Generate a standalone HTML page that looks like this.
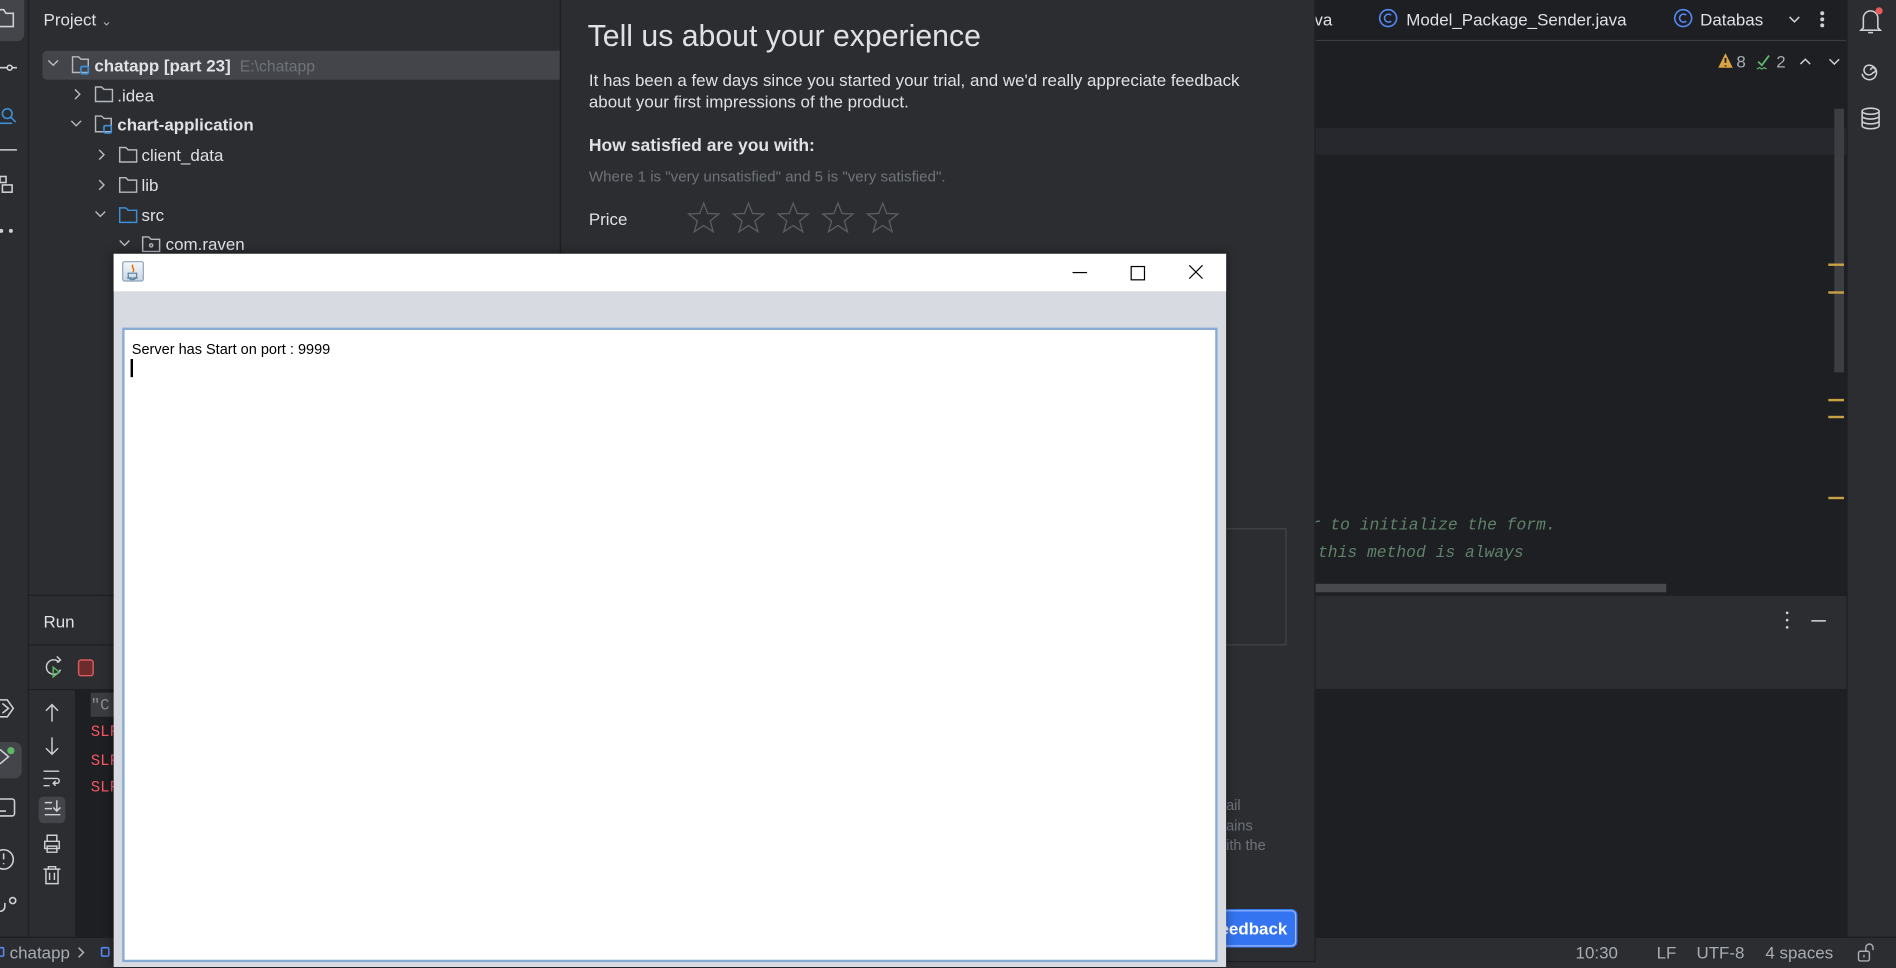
<!DOCTYPE html>
<html><head><meta charset="utf-8">
<style>
html,body{margin:0;padding:0;background:#1e1f22;overflow:hidden;width:1896px;height:967px}
#w{position:absolute;left:0;top:0;width:1568px;height:800px;transform:scale(1.20918,1.20875);transform-origin:0 0;background:#1e1f22;font-family:"Liberation Sans",sans-serif;color:#dfe1e5}
.a{position:absolute}
.t{position:absolute;white-space:nowrap;font-size:14px;line-height:16px}
.mono{font-family:"Liberation Mono","DejaVu Sans Mono",monospace}
svg{position:absolute;overflow:visible}
</style></head><body><div id="w">

<!-- left strip -->
<div class="a" style="left:0;top:0;width:23px;height:775px;background:#2b2d30;border-right:1px solid #1e1f22"></div>
<div class="a" style="left:0;top:0;width:20px;height:34px;background:#43454a;border-radius:0 0 6px 0"></div>
<svg style="left:0;top:0" width="23" height="775" fill="none" stroke="#ced0d6" stroke-width="1.3">
<path d="M-3 8h6l2 3h6v11h-14z"/>
<path d="M0 56h6M10 56h4"/><circle cx="8" cy="56" r="2"/>
<circle cx="6" cy="94" r="4" stroke="#3d8fd8"/><path d="M9 97l4 4" stroke="#3d8fd8"/><path d="M0 102h10" stroke="#3d8fd8"/>
<path d="M0 124h14"/>
<rect x="0" y="146" width="5" height="5"/><rect x="2" y="153" width="8" height="6"/>
<circle cx="1" cy="191" r="1" fill="#ced0d6"/><circle cx="9" cy="191" r="1" fill="#ced0d6"/>
<path d="M-2 579h8l5 7-5 7h-8M2 582l5 4-5 4"/>
<path d="M0 620l8 6-8 6"/>
<rect x="-6" y="661" width="18" height="14" rx="2"/><path d="M0 671h5"/>
<circle cx="3" cy="711" r="8"/><path d="M3 706v5M3 714v1"/>
<path d="M0 754a4 4 0 0 0 4-4v-3M8 745a2.5 2.5 0 1 1 0 .1"/>
</svg>
<div class="a" style="left:0;top:614px;width:18px;height:30px;background:#43454a;border-radius:0 6px 6px 0"></div>
<svg style="left:0;top:614px" width="20" height="30" fill="none" stroke="#ced0d6" stroke-width="1.3"><path d="M0 6l7 6-7 6"/><circle cx="9" cy="7" r="3" fill="#5fb865" stroke="none"/></svg>

<!-- project panel -->
<div class="a" style="left:24px;top:0;width:439px;height:492px;background:#2b2d30"></div>
<div class="t" style="left:36px;top:8px;font-size:14px;color:#dfe1e5">Project <span style="font-size:11px;color:#aaa">⌄</span></div>
<div class="a" style="left:35px;top:42px;width:428px;height:24px;background:#43454a;border-radius:4px 0 0 4px"></div>
<svg style="left:0;top:0" width="463" height="215" fill="none" stroke="#b4b8bf" stroke-width="1.2">
<path d="M40 50l4 4 4-4"/>
<path d="M60 47h5l2 2h6v11h-13z"/><rect x="67" y="55" width="6" height="6" rx="1" stroke="#3d8fd8" stroke-width="1.4"/>
<path d="M62 74l4 4-4 4"/><path d="M79 72h5l2 2h7v10h-14z"/>
<path d="M59 100l4 4 4-4"/><path d="M79 96h5l2 2h6v11h-13z"/><rect x="86" y="104" width="6" height="6" rx="1" stroke="#3d8fd8" stroke-width="1.4"/>
<path d="M82 124l4 4-4 4"/><path d="M99 122h5l2 2h7v10h-14z"/>
<path d="M82 149l4 4-4 4"/><path d="M99 147h5l2 2h7v10h-14z"/>
<path d="M79 175l4 4 4-4"/><path d="M99 172h5l2 2h7v10h-14z" stroke="#3d8fd8"/>
<path d="M99 199l4 4 4-4"/><path d="M118 196h5l2 2h7v10h-14z"/><circle cx="125" cy="203" r="1.3"/>
</svg>
<div class="t" style="left:78px;top:46px;font-weight:bold;color:#dfe1e5">chatapp [part 23] <span style="font-weight:normal;color:#6f737a;font-size:13px">&nbsp;E:\chatapp</span></div>
<div class="t" style="left:97px;top:71px">.idea</div>
<div class="t" style="left:97px;top:95px;font-weight:bold">chart-application</div>
<div class="t" style="left:117px;top:120px">client_data</div>
<div class="t" style="left:117px;top:145px">lib</div>
<div class="t" style="left:117px;top:170px">src</div>
<div class="t" style="left:137px;top:194px">com.raven</div>

<!-- run panel -->
<div class="a" style="left:24px;top:492px;width:439px;height:283px;background:#2b2d30;border-top:1px solid #1e1f22"></div>
<div class="t" style="left:36px;top:506px;color:#dfe1e5">Run</div>
<div class="a" style="left:24px;top:533px;width:439px;height:1px;background:#1e1f22"></div>
<div class="a" style="left:24px;top:570px;width:439px;height:1px;background:#1e1f22"></div>
<div class="a" style="left:62px;top:571px;width:401px;height:204px;background:#1e1f22"></div>
<div class="a" style="left:75px;top:573px;width:20px;height:20px;background:#3a3c40"></div>
<div class="t mono" style="left:75px;top:576px;font-size:13px;color:#8c8f94">"C</div>
<div class="t mono" style="left:75px;top:598px;font-size:13px;color:#f75464">SLF</div>
<div class="t mono" style="left:75px;top:622px;font-size:13px;color:#f75464">SLF</div>
<div class="t mono" style="left:75px;top:644px;font-size:13px;color:#f75464">SLF</div>
<div class="a" style="left:32px;top:659px;width:22px;height:22px;background:#43454a;border-radius:4px"></div>
<svg style="left:0;top:0" width="100" height="800" fill="none" stroke="#ced0d6" stroke-width="1.2">
<path d="M49 548a6 6 0 1 0 1 6M47 543l3 3-3 2"/><path d="M44 552v8l5-4z" stroke="#5fb865"/>
<rect x="65" y="546" width="12" height="13" rx="2" fill="#6e2b2b" stroke="#db5c5c"/>
<path d="M43 583v14M38 588l5-5 5 5"/>
<path d="M43 610v14M38 619l5 5 5-5"/>
<path d="M36 638h13M36 644h11a2 2 0 0 1 0 4h-3M46 646l-2 2 2 2M36 650h5"/>
<path d="M37 664h6M37 669h6M37 674h13M47 662v9M44 668l3 3 3-3"/>
<path d="M37 696h12v6h-12zM39 696v-5h8v5M39 700h8v5h-8z"/>
<path d="M36 719h14M40 719v-2h6v2M38 719v12h10v-12M41 722v6M45 722v6"/>
</svg>

<!-- editor area -->
<div class="a" style="left:1087px;top:0;width:440px;height:33px;background:#1e1f22;border-bottom:1px solid #393b40"></div>
<div class="t" style="left:1087px;top:8px">va</div>
<svg style="left:1140px;top:7px" width="16" height="16" fill="none" stroke="#548af7" stroke-width="1.3"><circle cx="8" cy="8" r="7"/><path d="M10.5 5.5a3.3 3.3 0 1 0 0 5"/></svg>
<div class="t" style="left:1163px;top:8px">Model_Package_Sender.java</div>
<svg style="left:1384px;top:7px" width="16" height="16" fill="none" stroke="#548af7" stroke-width="1.3"><circle cx="8" cy="8" r="7"/><path d="M10.5 5.5a3.3 3.3 0 1 0 0 5"/></svg>
<div class="t" style="left:1406px;top:8px;color:#dfe1e5">Databas</div>
<svg style="left:1480px;top:10px" width="40" height="14" fill="none" stroke="#ced0d6" stroke-width="1.3"><path d="M0 4l4 4 4-4"/><circle cx="27" cy="1" r="1" fill="#ced0d6"/><circle cx="27" cy="6" r="1" fill="#ced0d6"/><circle cx="27" cy="11" r="1" fill="#ced0d6"/></svg>
<svg style="left:1421px;top:43px" width="100" height="16"><path d="M6 1l6 12h-12z" fill="#d9a343"/><path d="M6 5v4M6 11v1" stroke="#1e1f22" stroke-width="1.5"/><path d="M33 8l3 3 6-8" stroke="#5fb865" stroke-width="1.5" fill="none"/><path d="M32 14l2-1 2 1 2-1 2 1" stroke="#5fb865" fill="none"/><path d="M68 10l4-4 4 4M92 6l4 4 4-4" stroke="#ced0d6" stroke-width="1.2" fill="none"/></svg>
<div class="t" style="left:1436px;top:43px;color:#a8adb5">8</div>
<div class="t" style="left:1469px;top:43px;color:#a8adb5">2</div>
<div class="a" style="left:1087px;top:106px;width:440px;height:22px;background:#26282e"></div>
<div class="a" style="left:1517px;top:90px;width:8px;height:218px;background:#3c3e42"></div>
<div class="a" style="left:1512px;top:218px;width:13px;height:2px;background:#c9a046"></div>
<div class="a" style="left:1512px;top:241px;width:13px;height:2px;background:#c9a046"></div>
<div class="a" style="left:1512px;top:330px;width:13px;height:2px;background:#c9a046"></div>
<div class="a" style="left:1512px;top:344px;width:13px;height:2px;background:#c9a046"></div>
<div class="a" style="left:1512px;top:411px;width:13px;height:2px;background:#c9a046"></div>
<div class="t mono" style="left:1084px;top:428px;font-style:italic;color:#5f826b;font-size:13.5px">r to initialize the form.</div>
<div class="t mono" style="left:1090px;top:451px;font-style:italic;color:#5f826b;font-size:13.5px">this method is always</div>
<div class="a" style="left:1087px;top:483px;width:291px;height:7px;background:#48494d"></div>
<div class="a" style="left:1087px;top:492px;width:440px;height:41px;background:#2b2d30;border-top:1px solid #1e1f22"></div>
<div class="a" style="left:1087px;top:534px;width:440px;height:36px;background:#2b2d30"></div>
<svg style="left:1470px;top:505px" width="44" height="18" fill="#ced0d6"><circle cx="8" cy="2" r="1.1"/><circle cx="8" cy="8" r="1.1"/><circle cx="8" cy="14" r="1.1"/><rect x="28" y="8" width="12" height="1.3"/></svg>

<!-- right strip -->
<div class="a" style="left:1527px;top:0;width:41px;height:775px;background:#2b2d30;border-left:1px solid #1e1f22"></div>
<svg style="left:1527px;top:0" width="41" height="120" fill="none" stroke="#ced0d6" stroke-width="1.3">
<path d="M14 23v-8a6 6 0 0 1 12 0v8l2 2h-16z M18 27h4"/><circle cx="27" cy="9" r="3" fill="#e55b5b" stroke="none"/>
<path d="M20 58a2 2 0 1 1 2 2a4 4 0 1 1 -4-6a6 6 0 1 1 -5 7"/>
<ellipse cx="20" cy="92" rx="7" ry="2.5"/><path d="M13 92v12a7 2.5 0 0 0 14 0v-12M13 96a7 2.5 0 0 0 14 0M13 100a7 2.5 0 0 0 14 0"/>
</svg>

<!-- status bar -->
<div class="a" style="left:0;top:775px;width:1568px;height:25px;background:#2b2d30;border-top:1px solid #1e1f22"></div>
<svg style="left:0;top:780px" width="100" height="16" fill="none" stroke="#548af7" stroke-width="1.3"><rect x="-3" y="4" width="6" height="7" rx="1"/><path d="M65 4l4 4-4 4" stroke="#a8adb5"/><rect x="84" y="4" width="6" height="7" rx="1"/></svg>
<div class="t" style="left:8px;top:780px;color:#a8adb5;font-size:14px">chatapp</div>
<div class="t" style="left:1303px;top:780px;color:#a8adb5">10:30</div>
<div class="t" style="left:1370px;top:780px;color:#a8adb5">LF</div>
<div class="t" style="left:1403px;top:780px;color:#a8adb5">UTF-8</div>
<div class="t" style="left:1460px;top:780px;color:#a8adb5">4 spaces</div>
<svg style="left:1535px;top:779px" width="20" height="18" fill="none" stroke="#a8adb5" stroke-width="1.2"><rect x="2" y="8" width="9" height="8" rx="1.5"/><path d="M8 8v-3a3 3 0 0 1 6 0v2M6.5 11v2"/></svg>

<!-- feedback dialog -->
<div class="a" style="left:463px;top:0;width:623px;height:795px;background:#2b2d30;border-left:1px solid #1e1f22;border-right:1px solid #1e1f22;border-bottom:1px solid #1e1f22"></div>
<div class="t" style="left:486px;top:16px;font-size:25px;line-height:29px;color:#dfe1e5">Tell us about your experience</div>
<div class="t" style="left:487px;top:57px;font-size:14px;line-height:18px;color:#dfe1e5">It has been a few days since you started your trial, and we'd really appreciate feedback<br>about your first impressions of the product.</div>
<div class="t" style="left:487px;top:113px;font-size:14.5px;font-weight:bold;color:#dfe1e5">How satisfied are you with:</div>
<div class="t" style="left:487px;top:138px;font-size:12.5px;color:#6f737a">Where 1 is "very unsatisfied" and 5 is "very satisfied".</div>
<div class="t" style="left:487px;top:173px;font-size:14px;color:#dfe1e5">Price</div>
<svg style="left:569px;top:167px" width="180" height="28" fill="none" stroke="#5a5d63" stroke-width="1.1">
<g id="s"><path d="M13 1l3.3 8.6 9.2.4-7.2 5.8 2.5 8.9-7.8-5.1-7.8 5.1 2.5-8.9-7.2-5.8 9.2-.4z"/></g>
<use href="#s" x="37"/><use href="#s" x="74"/><use href="#s" x="111"/><use href="#s" x="148"/>
</svg>
<div class="a" style="left:990px;top:437px;width:73px;height:95px;border:1px solid #43454a;border-left:none"></div>
<div class="t" style="left:1014px;top:658px;font-size:12px;color:#6f737a">ail</div>
<div class="t" style="left:1014px;top:675px;font-size:12px;color:#6f737a">ains</div>
<div class="t" style="left:1014px;top:691px;font-size:12px;color:#6f737a">ith the</div>
<div class="a" style="left:990px;top:753px;width:80px;height:28px;background:#3574f0;border:1px solid #99bbff;border-radius:4px;box-shadow:0 0 0 1px #3574f0"></div>
<div class="t" style="left:1000px;top:760px;font-size:14px;font-weight:bold;color:#fff">Feedback</div>

<!-- java window -->
<div class="a" style="left:94px;top:210px;width:920px;height:590px;background:#d7dae1;box-shadow:0 0 8px rgba(0,0,0,.5)"></div>
<div class="a" style="left:94px;top:210px;width:920px;height:31px;background:#fff"></div>
<div class="a" style="left:101px;top:216px;width:16px;height:15px;border:1px solid #8aa0b8;border-radius:2px;background:linear-gradient(#f3f6fa,#cdd7e3)"></div>
<svg style="left:102px;top:217px" width="16" height="15"><path d="M8 2c-2 2 2 3 0 6" stroke="#e76f00" fill="none" stroke-width="1.2"/><path d="M4 9h7v2a3 3 0 0 1-7 0z M3 13h9" stroke="#5382a1" fill="none"/></svg>
<div class="a" style="left:887px;top:225px;width:12px;height:1px;background:#000"></div>
<div class="a" style="left:935px;top:220px;width:10px;height:10px;border:1px solid #000"></div>
<svg style="left:983px;top:219px" width="12" height="12" stroke="#000" stroke-width="1"><path d="M0.5 0.5l11 11M11.5 0.5l-11 11"/></svg>
<div class="a" style="left:101px;top:271px;width:902px;height:521px;background:#fff;border:2px solid #88aad3"></div>
<div class="t" style="left:109px;top:282px;font-size:12px;line-height:14px;color:#000">Server has Start on port : 9999</div>
<div class="a" style="left:108px;top:297px;width:2px;height:15px;background:#000"></div>

</div></body></html>
